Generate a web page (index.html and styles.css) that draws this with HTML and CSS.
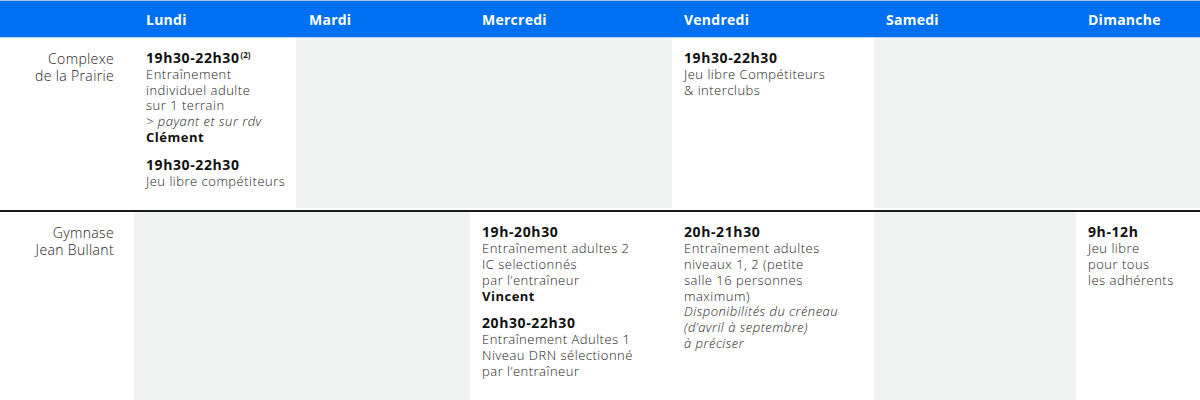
FILE: index.html
```html
<!DOCTYPE html>
<html lang="fr">
<head>
<meta charset="utf-8">
<title>Planning</title>
<link rel="stylesheet" href="styles.css">
</head>
<body>
<div class="planning">
  <div class="head">
    <div class="hcell c-label"></div>
    <div class="hcell c-lun">Lundi</div>
    <div class="hcell c-mar">Mardi</div>
    <div class="hcell c-mer">Mercredi</div>
    <div class="hcell c-ven">Vendredi</div>
    <div class="hcell c-sam">Samedi</div>
    <div class="hcell c-dim">Dimanche</div>
  </div>

  <div class="row row-1">
    <div class="cell c-label label">Complexe<br>de la Prairie</div>
    <div class="cell c-lun">
      <p class="slot"><b class="time">19h30-22h30<sup>(2)</sup></b><br>Entraînement<br>individuel adulte<br>sur 1 terrain<br><i>&gt; payant et sur rdv</i><br><b class="who">Clément</b></p>
      <p class="slot"><b class="time">19h30-22h30</b><br>Jeu libre compétiteurs</p>
    </div>
    <div class="cell empty c-mar-mer"></div>
    <div class="cell c-ven">
      <p class="slot"><b class="time">19h30-22h30</b><br>Jeu libre Compétiteurs<br>&amp; interclubs</p>
    </div>
    <div class="cell empty c-sam-dim"></div>
  </div>

  <div class="sep"></div>

  <div class="row row-2">
    <div class="cell c-label label">Gymnase<br>Jean Bullant</div>
    <div class="cell empty c-lun-mar"></div>
    <div class="cell c-mer">
      <p class="slot"><b class="time">19h-20h30</b><br>Entraînement adultes 2<br>IC selectionnés<br>par l’entraîneur<br><b class="who">Vincent</b></p>
      <p class="slot"><b class="time">20h30-22h30</b><br>Entraînement Adultes 1<br>Niveau DRN sélectionné<br>par l’entraîneur</p>
    </div>
    <div class="cell c-ven">
      <p class="slot"><b class="time">20h-21h30</b><br>Entraînement adultes<br>niveaux 1, 2 (petite<br>salle 16 personnes<br>maximum)<br><i>Disponibilités du créneau<br>(d’avril à septembre)<br>à préciser</i></p>
    </div>
    <div class="cell empty c-sam"></div>
    <div class="cell c-dim">
      <p class="slot"><b class="time">9h-12h</b><br>Jeu libre<br>pour tous<br>les adhérents</p>
    </div>
  </div>
</div>
</body>
</html>
```
FILE: styles.css
```css
html, body {
  margin: 0;
  padding: 0;
  background: #ffffff;
}

.planning {
  width: 1200px;
  font-family: "Open Sans", "Liberation Sans", sans-serif;
  color: #222222;
}

.head {
  display: grid;
  grid-template-columns: 134px 162px 174px 202px 202px 202px 124px;
  height: 36px;
  background: #0070f2;
  border-top: 1px solid #9fc4ee;
  border-bottom: 1px solid #b9d5f3;
}

.hcell {
  display: flex;
  align-items: center;
  padding-left: 12px;
  color: #ffffff;
  font-weight: 700;
  font-size: 14px;
  letter-spacing: 0.25px;
}

.hcell.c-mar { padding-left: 13px; }

.row {
  display: grid;
  grid-template-columns: 134px 162px 174px 202px 202px 202px 124px;
}

.row-2 { min-height: 190px; }

.row-1 .c-mar-mer { grid-column: 3 / span 2; }
.row-1 .c-sam-dim { grid-column: 6 / span 2; }
.row-2 .c-lun-mar { grid-column: 2 / span 2; }

.cell {
  padding: 11px 12px 19px;
  font-size: 13px;
  font-weight: 300;
  line-height: 15.8px;
  letter-spacing: 0.5px;
  white-space: nowrap;
}

.cell.empty { background: #f1f3f3; }

.label {
  text-align: right;
  padding-right: 20px;
  padding-top: 12px;
  font-size: 14px;
  line-height: 17px;
  letter-spacing: 0.35px;
}

.slot { margin: 0; }
.slot + .slot { margin-top: 10px; }

.time {
  display: inline-block;
  font-weight: 700;
  font-size: 14px;
  line-height: 17px;
  letter-spacing: 0.6px;
  color: #111111;
}

.time sup {
  font-size: 8px;
  line-height: 0;
  vertical-align: 5px;
  margin-left: 1px;
  letter-spacing: 0;
}

.slot i { font-style: italic; }

.who {
  font-weight: 700;
  color: #111111;
}

.sep {
  height: 2px;
  background: #1b1b1b;
  margin: 2px 0 0;
}
```
